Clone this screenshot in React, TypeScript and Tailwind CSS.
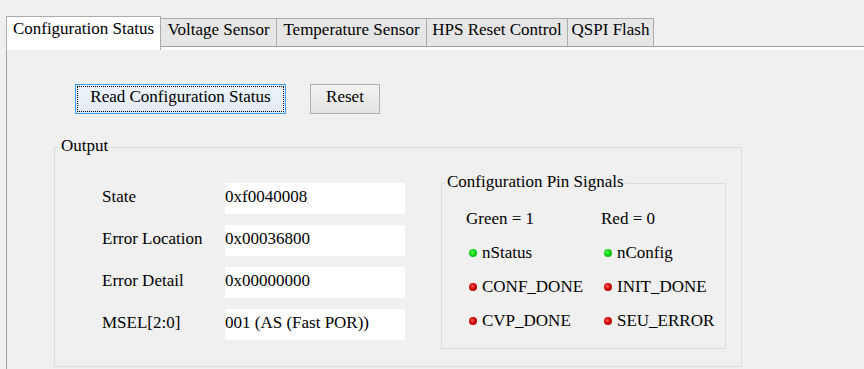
import React from "react";

const font = { fontFamily: '"Liberation Serif", "Times New Roman", serif' };

function Dot({ on }: { on: boolean }) {
  return (
    <span
      className={
        on
          ? "inline-block w-[8px] h-[8px] rounded-full bg-[radial-gradient(circle_at_40%_40%,#5fff5f_0%,#10d010_45%,#009a00_100%)]"
          : "inline-block w-[8px] h-[8px] rounded-full bg-[radial-gradient(circle_at_40%_40%,#ff6060_0%,#d00000_45%,#900000_100%)]"
      }
    />
  );
}

function Signal({ on, label }: { on: boolean; label: string }) {
  return (
    <div className="flex items-center h-[34px]">
      <span className="ml-[3px] mr-[5px] flex items-center">
        <Dot on={on} />
      </span>
      <span className="leading-[20px]">{label}</span>
    </div>
  );
}

function Row({ label, value }: { label: string; value: string }) {
  return (
    <div className="flex h-[31px]">
      <div className="w-[123px] pt-[4px] leading-[20px]">{label}</div>
      <div className="w-[180px] bg-white pt-[4px] leading-[20px] whitespace-nowrap">{value}</div>
    </div>
  );
}

export default function App() {
  return (
    <div
      className="w-[864px] h-[369px] bg-[#f0f0f0] overflow-hidden text-[17px] text-black"
      style={font}
    >
      <div className="pl-[6px] pt-[16px]">
        {/* tabs */}
        <div className="flex items-end h-[30px] relative z-10">
          <div className="h-[34px] mb-[-4px] w-[155px] border border-b-0 border-[#acacac] bg-white text-center pt-[2px] leading-[20px] whitespace-nowrap">
            Configuration Status
          </div>
          <div className="h-[28px] w-[116px] border-t border-r border-[#acacac] bg-[#e6e6e6] text-center pt-[1px] leading-[20px] whitespace-nowrap">
            Voltage Sensor
          </div>
          <div className="h-[28px] w-[150px] border-t border-r border-[#acacac] bg-[#e6e6e6] text-center pt-[1px] leading-[20px] whitespace-nowrap">
            Temperature Sensor
          </div>
          <div className="h-[28px] w-[141px] border-t border-r border-[#acacac] bg-[#e6e6e6] text-center pt-[1px] leading-[20px] whitespace-nowrap">
            HPS Reset Control
          </div>
          <div className="h-[28px] w-[86px] border-t border-r border-[#acacac] bg-[#e6e6e6] text-center pt-[1px] leading-[20px] whitespace-nowrap">
            QSPI Flash
          </div>
        </div>

        {/* pane */}
        <div className="border-t border-l border-[#a0a0a0] h-[330px]">
          <div className="border-t-[3px] border-white">
            {/* buttons */}
            <div className="flex mt-[34px] ml-[68px]">
              <button className="relative w-[211px] h-[30px] border border-[#3c9cfc] bg-gradient-to-b from-[#ecf3fb] to-[#e2eaf3] pt-0 pb-[4px] leading-[20px] text-[17px] whitespace-nowrap">
                <span className="absolute inset-[1px] border border-dotted border-black" />
                Read Configuration Status
              </button>
              <button className="ml-[24px] w-[70px] h-[30px] border border-[#adadad] bg-gradient-to-b from-[#f2f2f2] to-[#e4e4e4] pt-0 pb-[4px] leading-[20px] text-[17px]">
                Reset
              </button>
            </div>

            {/* Output group */}
            <div className="relative mt-[33px] ml-[47px] w-[688px] h-[220px] border border-[#dcdcdc]">
              <span className="absolute -top-[12px] left-[5px] px-[1px] bg-[#f0f0f0] leading-[20px]">
                Output
              </span>
              <div className="flex items-start pt-[35px] pl-[47px]">
                <div className="flex flex-col gap-[11px]">
                  <Row label="State" value="0xf0040008" />
                  <Row label="Error Location" value="0x00036800" />
                  <Row label="Error Detail" value="0x00000000" />
                  <Row label="MSEL[2:0]" value="001 (AS (Fast POR))" />
                </div>

                <div className="relative ml-[36px] w-[285px] h-[166px] border border-[#dcdcdc]">
                  <span className="absolute -top-[12px] left-[4px] px-[1px] bg-[#f0f0f0] leading-[20px] whitespace-nowrap">
                    Configuration Pin Signals
                  </span>
                  <div className="grid grid-cols-[135px_1fr] pt-[18px] pl-[24px]">
                    <div className="h-[34px] flex items-center leading-[20px]">Green = 1</div>
                    <div className="h-[34px] flex items-center leading-[20px]">Red = 0</div>
                    <Signal on={true} label="nStatus" />
                    <Signal on={true} label="nConfig" />
                    <Signal on={false} label="CONF_DONE" />
                    <Signal on={false} label="INIT_DONE" />
                    <Signal on={false} label="CVP_DONE" />
                    <Signal on={false} label="SEU_ERROR" />
                  </div>
                </div>
              </div>
            </div>
          </div>
        </div>
      </div>
    </div>
  );
}
